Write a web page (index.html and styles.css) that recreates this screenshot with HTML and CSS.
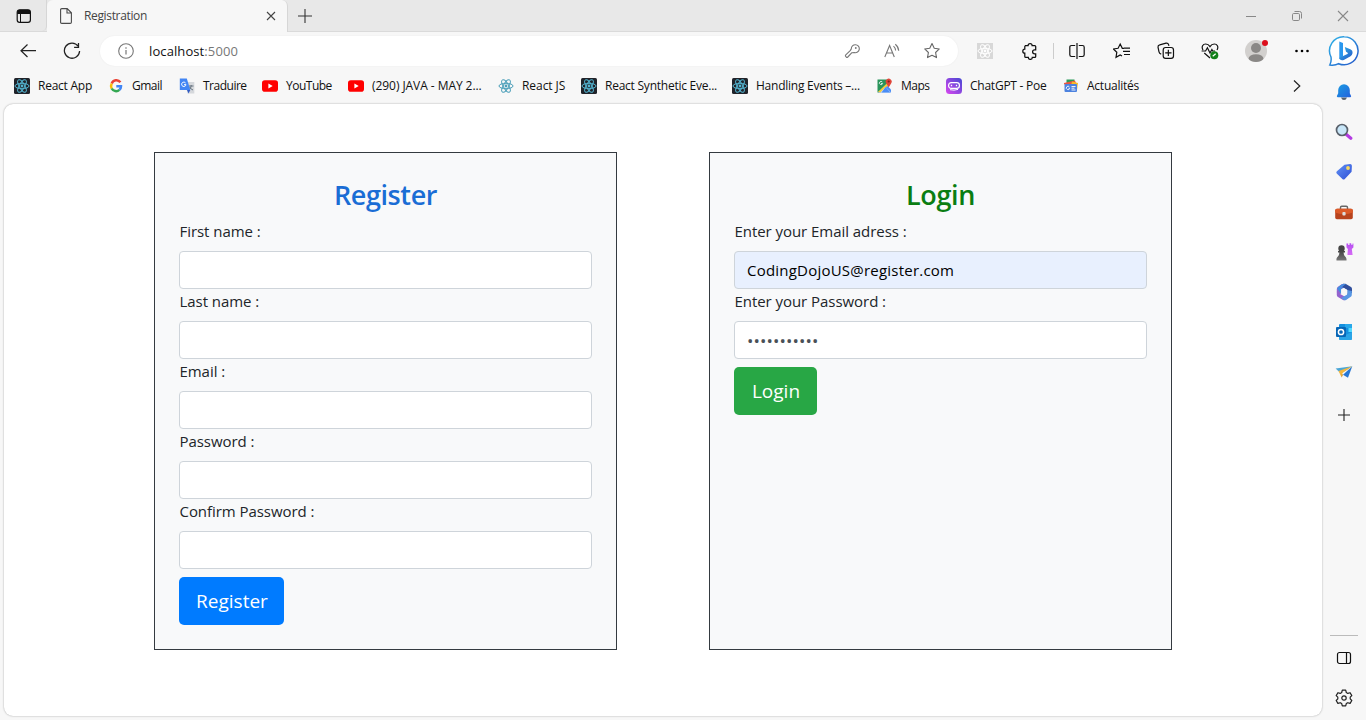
FILE: index.html
```html
<!DOCTYPE html>
<html lang="en">
<head>
<meta charset="utf-8">
<title>Registration</title>
<link rel="stylesheet" href="styles.css">
</head>
<body>
<svg width="0" height="0" class="defs" aria-hidden="true">
  <defs>
    <symbol id="atom" viewBox="0 0 16 16"><g fill="none" stroke="currentColor" stroke-width="1"><ellipse cx="8" cy="8" rx="7" ry="2.7"/><ellipse cx="8" cy="8" rx="7" ry="2.7" transform="rotate(60 8 8)"/><ellipse cx="8" cy="8" rx="7" ry="2.7" transform="rotate(120 8 8)"/></g><circle cx="8" cy="8" r="1.4" fill="currentColor"/></symbol>
    <symbol id="yt" viewBox="0 0 16 16"><rect y="2.3" width="16" height="11.4" rx="2.8" fill="#f00"/><path d="M6.4 5.6v4.8L10.7 8z" fill="#fff"/></symbol>
    <linearGradient id="bingG" x1="0" y1="0" x2="1" y2="1"><stop offset="0" stop-color="#31b5e8"/><stop offset="1" stop-color="#2456c9"/></linearGradient>
    <linearGradient id="bellG" x1="0" y1="0" x2="1" y2="1"><stop offset="0" stop-color="#1b9de2"/><stop offset="1" stop-color="#2361dd"/></linearGradient>
    <linearGradient id="tagG" x1="0" y1="0" x2="1" y2="1"><stop offset="0" stop-color="#6292f4"/><stop offset="1" stop-color="#2e4fd6"/></linearGradient>
    <linearGradient id="poeG" x1="0" y1="1" x2="1" y2="0"><stop offset="0" stop-color="#d946ef"/><stop offset="1" stop-color="#4548d2"/></linearGradient>
    <linearGradient id="pawnG" x1="0" y1="0" x2="0" y2="1"><stop offset="0" stop-color="#444"/><stop offset="1" stop-color="#777"/></linearGradient>
    <linearGradient id="rookG" x1="0" y1="0" x2="0" y2="1"><stop offset="0" stop-color="#b44df0"/><stop offset="1" stop-color="#d66cf5"/></linearGradient>
  </defs>
</svg>

<header class="tabstrip">
  <div class="tab-menu"><svg width="16" height="16" viewBox="0 0 16 16"><rect x="1.2" y="1.8" width="13.2" height="12.6" rx="2.4" fill="none" stroke="#111" stroke-width="1.2"/><path d="M1.2 6V4.2A2.4 2.4 0 0 1 3.6 1.8H12a2.4 2.4 0 0 1 2.4 2.4V6z" fill="#111"/><path d="M4.5 6v8" stroke="#111"/></svg></div>
  <div class="tab">
    <svg width="14" height="16" viewBox="0 0 14 16"><path d="M2.8.6h5.4l4.2 4.2v9.4q0 1.2-1.2 1.2H2.8q-1.2 0-1.2-1.2V1.8Q1.6.6 2.8.6zM8 .8V5h4.2" fill="none" stroke="#4b4b4b" stroke-width="1.1"/></svg>
    <span class="tab-title">Registration</span>
    <svg class="tab-close" width="10" height="10" viewBox="0 0 10 10"><path d="M1 1l8 8M9 1L1 9" stroke="#444" stroke-width="1.1"/></svg>
  </div>
  <div class="new-tab"><svg width="16" height="16" viewBox="0 0 16 16"><path d="M8 1v14M1 8h14" stroke="#333" stroke-width="1.1"/></svg></div>
  <div class="window-buttons">
    <span><svg width="12" height="12" viewBox="0 0 12 12"><path d="M1 6.5h10" stroke="#888"/></svg></span>
    <span><svg width="12" height="12" viewBox="0 0 12 12"><g fill="none" stroke="#888"><rect x="1.5" y="3.5" width="7" height="7" rx="1.2"/><path d="M3.5 1.5H8.5a2 2 0 0 1 2 2v5"/></g></svg></span>
    <span><svg width="12" height="12" viewBox="0 0 12 12"><path d="M1 1l10 10M11 1L1 11" stroke="#888" stroke-width="1.1"/></svg></span>
  </div>
</header>

<div class="browser">
  <div class="main">
    <nav class="toolbar">
      <span class="tool"><svg width="18" height="18" viewBox="0 0 18 18"><path d="M8.5 2.5L2 8.7l6.5 6.3M2 8.7h15" fill="none" stroke="#222" stroke-width="1.2"/></svg></span>
      <span class="tool"><svg width="18" height="18" viewBox="0 0 18 18"><path d="M15.2 4.2A7.6 7.6 0 1 0 16.6 9M15.5 1v4.4h-4.4" fill="none" stroke="#222" stroke-width="1.25"/></svg></span>
      <div class="address">
        <svg class="info" width="16" height="16" viewBox="0 0 16 16"><circle cx="8" cy="8" r="7.3" fill="none" stroke="#777" stroke-width="1.1"/><path d="M8 7v4.5M8 4.3v1.4" stroke="#777" stroke-width="1.2"/></svg>
        <span class="url">localhost<span class="port">:5000</span></span>
        <span class="addr-icon key"><svg width="16" height="16" viewBox="0 0 16 16"><path d="M7.300 5.900a4 4 0 1 1 3 3.700L7.900 9.700 3.800 14q-.8.700-1.600 0l-.5-.6q-.6-.8.100-1.500L6.200 7.600z" fill="none" stroke="#777" stroke-width="1.100" stroke-linejoin="round"/><circle cx="11.800" cy="5" r=".9" fill="#777"/></svg></span>
        <span class="addr-icon"><svg width="16" height="16" viewBox="0 0 16 16"><path d="M.8 14L5.600 2.500 10.300 14M2.500 10h6.200M9.500 3.200q2 1.700 2.100 4.400M11.300 1.200q3.200 2.600 3.400 6.500" fill="none" stroke="#777" stroke-width="1.100"/></svg></span>
        <span class="addr-icon"><svg width="18" height="18" viewBox="0 0 18 18"><path d="M9 1.600l2.250 4.650 5.050.7-3.700 3.550.9 5.100L9 13.200l-4.500 2.400.9-5.100L1.700 6.950l5.050-.7z" fill="none" stroke="#666" stroke-width="1.100" stroke-linejoin="round"/></svg></span>
      </div>
      <span class="tool ext"><svg width="16" height="16"><rect width="16" height="16" fill="#d8d8d8"/><use href="#atom" color="#fff"/></svg></span>
      <span class="tool puzzle"><svg width="18" height="18" viewBox="0 0 18 18"><path d="M4 3.600h3.100a2 2 0 0 1 4 0h2.600q1 0 1 1v3.200h-1.100a2 2 0 0 0 0 4h1.100v2.600q0 1-1 1h-2.400a2 2 0 0 1-4 0H4.800q-1 0-1-1v-3.200a2 2 0 0 1 0-4V4.600q0-1 1-1" fill="none" stroke="#111" stroke-width="1.250"/></svg></span>
      <i class="sep"></i>
      <span class="tool"><svg width="16" height="16" viewBox="0 0 16 16"><path d="M6.200 2.500H2.500q-1.700 0-1.700 1.700v7.600q0 1.700 1.700 1.700h3.700M9.800 2.500h3.700q1.700 0 1.700 1.700v7.600q0 1.700-1.700 1.700H9.800M8 0v16" fill="none" stroke="#111" stroke-width="1.200"/></svg></span>
      <span class="tool fav"><svg width="18" height="18" viewBox="0 0 18 18"><path d="M11 6.300H9.300L7.200 2 5.100 6.300l-4.700.7 3.400 3.300-.8 5 4.200-2.300 1.800 1M11 6.200h6M10 9.300h7M11 12.500h6" fill="none" stroke="#111" stroke-width="1.200"/></svg></span>
      <span class="tool"><svg width="18" height="18" viewBox="0 0 18 18"><path d="M4.200 12.200Q2.400 11.700 2 9.800L1 5.200Q.8 3.300 2.700 2.900L9 1.200q2-.4 2.700 1.700l.2 1" fill="none" stroke="#111" stroke-width="1.200"/><rect x="6.200" y="5.500" width="10.300" height="10.800" rx="2.400" fill="#f7f7f7" stroke="#111" stroke-width="1.200"/><path d="M11.350 7.700v6.400M8.200 10.900h6.300" stroke="#111" stroke-width="1.200"/></svg></span>
      <span class="tool"><svg width="18" height="18" viewBox="0 0 18 18"><path d="M2 8C0 4.500 2 2 4.700 2 7 2 8.500 3.800 9 4.600 9.500 3.800 11 2 13.300 2 16 2 18 4.500 16 8M.6 9h4l1.800-3.200L9 11l1.900-3.500.8 1.500H14M3.300 11L9 16" fill="none" stroke="#111" stroke-width="1.200"/><circle cx="13.300" cy="13.200" r="4" fill="#13801a"/><path d="M11.700 14.200l3-2.500" stroke="#fff" stroke-width="1.300"/></svg></span>
      <span class="tool avatar"><svg width="24" height="26" viewBox="0 0 24 26"><defs><clipPath id="face"><circle cx="12" cy="13" r="11"/></clipPath></defs><circle cx="12" cy="13" r="11" fill="#d2d0ce"/><g clip-path="url(#face)" fill="#8a8886"><circle cx="12" cy="10" r="5"/><ellipse cx="12" cy="21" rx="7.500" ry="4.800"/></g><circle cx="21" cy="5" r="3" fill="#dc0f1c"/></svg></span>
      <span class="tool more"><svg width="16" height="4" viewBox="0 0 16 4"><circle cx="2.500" cy="2" r="1.300"/><circle cx="8" cy="2" r="1.300"/><circle cx="13.500" cy="2" r="1.300"/></svg></span>
    </nav>

    <nav class="bookmarks">
      <a><svg><rect width="16" height="16" rx="1.500" fill="#20232a"/><use href="#atom" color="#53b4d0"/></svg><span class="tight">React App</span></a>
      <a><svg viewBox="0 0 16 16"><g fill="none" stroke-width="2.500"><path d="M12.400 4.300A5 5 0 0 0 3.700 5.500" stroke="#ea4335"/><path d="M3.700 5.500a5 5 0 0 0 0 5" stroke="#fbbc05"/><path d="M3.700 10.500a5 5 0 0 0 7.700 1.400" stroke="#34a853"/><path d="M11.400 11.900Q13 10.500 13 8.200H8.300" stroke="#4285f4"/></g></svg><span class="tighter">Gmail</span></a>
      <a><svg viewBox="0 0 16 16"><path d="M6 4h9.300v11.500H8.500z" fill="#d5d8dc"/><path d="M10 8h4.500M12.200 7v1q-.3 3-2.500 4M10.500 9q1 2 3.500 3" fill="none" stroke="#687580"/><path d="M.8.500h7l3.500 11.500H.8z" fill="#4285f4"/><path d="M8 12h3.300L9.500 15.500z" fill="#315bc4"/><path d="M6.600 5A2.200 2.200 0 1 0 7 6.700H5" fill="none" stroke="#fff" stroke-width="1"/></svg><span class="tighter">Traduire</span></a>
      <a><svg><use href="#yt"/></svg><span class="tighter">YouTube</span></a>
      <a><svg><use href="#yt"/></svg><span class="snug">(290) JAVA - MAY 2...</span></a>
      <a><svg><use href="#atom" color="#4c9fb9"/></svg><span class="snug">React JS</span></a>
      <a><svg><rect width="16" height="16" rx="1.500" fill="#20232a"/><use href="#atom" color="#53b4d0"/></svg><span class="tight">React Synthetic Eve...</span></a>
      <a><svg><rect width="16" height="16" rx="1.500" fill="#20232a"/><use href="#atom" color="#53b4d0"/></svg><span class="tight">Handling Events –...</span></a>
      <a><svg viewBox="0 0 16 16"><path d="M.5 1.500H11v5L1.500 14.500H.5z" fill="#29945a"/><path d="M1 14.500L9 6.500l5 5v3z" fill="#4b8df5"/><path d="M.8 14L13 2.500v3L3.500 14.500z" fill="#f7cd38"/><path d="M8.500 9l5.500 5.500H3.500z" fill="#e7edf5"/><path d="M8.500 9l5 5.500h-9z" fill="#4b8df5"/><path d="M5.300 4A1.600 1.600 0 1 0 5.600 5.500H4" fill="none" stroke="#fff" stroke-width=".8"/><path d="M11.700 9.500L9.200 5.300A3 3 0 1 1 14.200 5.300z" fill="#df4538"/><circle cx="11.700" cy="3.500" r="1.100" fill="#871e19"/></svg><span class="tighter">Maps</span></a>
      <a><svg viewBox="0 0 16 16"><rect width="16" height="16" rx="3.500" fill="url(#poeG)"/><rect x="2.600" y="4.600" width="10.800" height="5.800" rx="2.600" fill="none" stroke="#fff" stroke-width="1.200"/><path d="M5.500 6.700v1.500M10.500 6.700v1.500" stroke="#fff" stroke-width="1.300"/><path d="M4 11.700q4 1 8-.3" fill="none" stroke="#fff"/></svg><span class="tight">ChatGPT - Poe</span></a>
      <a><svg viewBox="0 0 16 16"><path d="M3.500 1.500h8v5h-8z" fill="#2b9b58"/><path d="M1 5l11-2.500 1.500 4H1z" fill="#e95643"/><path d="M9 3.500l6 1.500-1 7H7z" fill="#f7bd27"/><rect x="1.500" y="6" width="12.500" height="8" rx="1" fill="#4c82df"/><path d="M6.400 8.900A1.700 1.700 0 1 0 6.700 10.300H5.500M8.500 8.500h4M8.500 10.200h3M8.500 12h4" fill="none" stroke="#fff" stroke-width=".9"/></svg><span class="tight">Actualités</span></a>
      <svg class="chevron" viewBox="0 0 16 16"><path d="M5 2.500L10.800 8 5 13.500" fill="none" stroke="#222" stroke-width="1.200"/></svg>
    </nav>

    <main class="page">
      <form class="card">
        <h3 class="register-title">Register</h3>
        <label>First name :</label><div class="field"></div>
        <label>Last name :</label><div class="field"></div>
        <label>Email :</label><div class="field"></div>
        <label>Password :</label><div class="field"></div>
        <label>Confirm Password :</label><div class="field"></div>
        <button type="button" class="btn btn-primary">Register</button>
      </form>
      <form class="card">
        <h3 class="login-title">Login</h3>
        <label>Enter your Email adress :</label>
        <div class="field autofill">CodingDojoUS@register.com</div>
        <label>Enter your Password :</label>
        <div class="field password">•••••••••••</div>
        <button type="button" class="btn btn-success">Login</button>
      </form>
    </main>
  </div>

  <aside class="sidebar">
    <span class="side bing"><svg width="32" height="32" viewBox="0 0 32 32"><path d="M16.200 1.800a14 14 0 1 1-5.600 26.900Q7 30.700 1.800 30 3.700 26.500 3 22A14 14 0 0 1 16.200 1.800z" fill="#fff" stroke="url(#bingG)" stroke-width="1.500"/><path d="M11.300 6.500l3.700 1.500v13.500l-3.700 2.600z" fill="#2a97ee"/><path d="M16.800 12l5.500 2.300q2.600 1.200 2.200 4-.4 1.900-2 2.900l-6.700 3.700q-2.300 1-4-.7-.6-1-.4-1.500l8-3.800q1.200-.7-.1-1.500l-1.300-.7z" fill="url(#bingG)"/></svg></span>
    <span class="side bell"><svg width="18" height="18" viewBox="0 0 18 18"><path d="M6 14.500h6q-.8 2.500-3 2.500t-3-2.500" fill="#58616c"/><path d="M3.200 7a5.800 5.800 0 0 1 11.600 0v3.300l1.300 2.800q.3 1.100-.8 1.100H2.700q-1.100 0-.8-1.100l1.300-2.800z" fill="url(#bellG)"/></svg></span>
    <span class="side"><svg width="18" height="18" viewBox="0 0 18 18"><path d="M10.500 10.700l5.300 4.500" stroke="#b43be2" stroke-width="3.200" stroke-linecap="round"/><circle cx="7" cy="7" r="5.500" fill="#c8e6f8" stroke="#59616b" stroke-width="1.700"/></svg></span>
    <span class="side"><svg width="18" height="18" viewBox="0 0 18 18"><path d="M9.500 1.700l5.700-.6q1.600 0 1.700 1.600l-.3 6L9.800 16q-1.200 1.200-2.400 0L1.700 10.500q-1-1.200.2-2.300z" fill="url(#tagG)"/><circle cx="13" cy="5" r="1.900" fill="#f9d85e"/></svg></span>
    <span class="side toolbox"><svg width="20" height="18" viewBox="0 0 20 18"><path d="M6.500 5V3.500q0-1.300 1.300-1.300h4.400q1.300 0 1.300 1.300V5" fill="none" stroke="#666" stroke-width="1.400"/><rect x="1.200" y="4.800" width="17.600" height="10.500" rx="1.700" fill="#b8431d"/><path d="M1.200 6.500q0-1.700 1.700-1.700h14.200q1.700 0 1.700 1.700v2q-4 1.500-8.800 1.500T1.200 8.500z" fill="#dc5a28"/><rect x="8.400" y="8" width="3.200" height="3.500" rx="1" fill="#ddd"/></svg></span>
    <span class="side"><svg width="20" height="20" viewBox="0 0 20 20"><path d="M12.500 1.500h1.700v1.400h1.300V1.200h1.700v1.500h1.400V1.400h.8v4l-1.600 1.500.8 6.100h-5.200l.5-6.100-1.400-1.500z" fill="url(#rookG)"/><circle cx="7.500" cy="6.500" r="3.200" fill="#444"/><path d="M4 9h7v1.600H9.600q0 3 2.200 4.600 1 1.400.7 3.300h-10q-.3-2 .7-3.300 2.200-1.600 2.200-4.600H4z" fill="url(#pawnG)"/></svg></span>
    <span class="side"><svg width="18" height="18" viewBox="0 0 18 18"><path d="M8.300.8q-6 2-6.500 8.500l3.700 2V6.600L13 2.500z" fill="#477ad8"/><path d="M8.300.8h2.200l5.500 3.300q1 .7 1 2v4L12.300 12V6.900L6.200 3.300z" fill="#314f9d"/><path d="M1.800 6v6q0 1.300 1.200 2l5 3q1 .6 2 0l3-1.800-7.500-4V6L9 1.500q-1-.8-2-.3L3 3.700Q1.800 4.500 1.800 6z" fill="#9463ce"/><path d="M16.800 8v3.800q0 1.300-1 2L11 17q-1 .5-2 0l-3-2 6.300-3.600V7z" fill="#5796e4"/><path d="M2 5.500Q2.800 3.900 7.200 1.200L11 .9 6.200 4.400v6.700z" fill="#438ee0"/><path d="M6.200 6.800L9 5.200l3.300 1.900v3.500L9.200 12.400l-3-1.800z" fill="#f7f7f7"/></svg></span>
    <span class="side"><svg width="18" height="18" viewBox="0 0 18 18"><rect x="4" y="1" width="13" height="15" rx="1" fill="#1490df"/><path d="M10 1h6.500q.5 0 .5.500V5h-7z" fill="#28a8ea"/><path d="M13.500 5H17v4h-3.500z" fill="#50d9ff"/><path d="M4 9l6.500 3L17 9v7.300q0 .7-.7.7H4.700Q4 17 4 16.300z" fill="#29a4e7"/><rect x="1" y="4" width="10" height="10" rx="1" fill="#0766b6"/><circle cx="6" cy="9" r="2.600" fill="none" stroke="#fff" stroke-width="1.500"/></svg></span>
    <span class="side"><svg width="18" height="18" viewBox="0 0 18 18"><path d="M.6 5.500L17.300 3.200 6 10.500z" fill="#4ba6d6"/><path d="M17.300 3.200L13 14.700l-5-3z" fill="#2877d4"/><path d="M3.500 8L17.300 3.200 7.500 10l-.9 4.500z" fill="#f6b73d"/><path d="M8.100 11.500L6.600 14.500v-3.200z" fill="#c78b25"/></svg></span>
    <span class="side add"><svg width="14" height="14" viewBox="0 0 14 14"><path d="M7 1v12M1 7h12" stroke="#222" stroke-width="1.100"/></svg></span>
    <i class="side-line"></i>
    <span class="side panel"><svg width="16" height="16" viewBox="0 0 16 16"><rect x="1.500" y="2.500" width="13" height="11" rx="2" fill="none" stroke="#111" stroke-width="1.200"/><path d="M10.500 2.500v11" stroke="#111" stroke-width="1.200"/></svg></span>
    <span class="side"><svg width="18" height="18" viewBox="0 0 18 18"><path d="M7.300 1.200h3.400l.6 2.300 1.500.9 2.300-.7 1.700 2.900L15.200 8.200v1.700l1.600 1.600-1.700 2.900-2.300-.7-1.500.9-.6 2.300H7.300l-.6-2.300-1.500-.9-2.300.7-1.700-2.900L2.800 9.900V8.200L1.200 6.600l1.700-2.900 2.300.7 1.500-.9z" fill="none" stroke="#222" stroke-width="1.200" stroke-linejoin="round"/><circle cx="9" cy="9" r="2.200" fill="none" stroke="#222" stroke-width="1.200"/></svg></span>
  </aside>
</div>
</body>
</html>
```
FILE: styles.css
```css
* { box-sizing: border-box; }
body { margin: 0; width: 1366px; height: 720px; overflow: hidden; background: #f7f7f7; font-family: "Open Sans", "Noto Sans", sans-serif; color: #212529; }
svg { display: block; flex: none; }
.defs { position: absolute; }
.tabstrip { display: flex; height: 32px; background: #e8e8e8; border-bottom: 1px solid #dadada; }
.tab-menu { width: 47px; display: flex; align-items: center; justify-content: center; padding-left: 1px; border-right: 1px solid #d6d6d6; border-radius: 0 0 5px 0; }
.tab { width: 241px; height: 32px; display: flex; align-items: center; gap: 11px; padding: 0 11px 0 12px; background: #f7f7f7; border-radius: 6px 6px 0 0; border-right: 1px solid #d6d6d6; }
.tab-title { font-size: 12px; line-height: 16px; letter-spacing: -.35px; color: #444; white-space: nowrap; }
.tab-close { margin-left: auto; }
.new-tab { width: 33px; display: grid; place-items: center; }
.window-buttons { display: flex; margin-left: auto; }
.window-buttons span { width: 46px; display: grid; place-items: center; }
.browser { display: flex; height: 688px; }
.main { width: 1322px; display: flex; flex-direction: column; }
.toolbar { height: 38px; display: flex; align-items: center; padding-left: 6px; }
.tool { width: 44px; display: grid; place-items: center; }
.address { width: 858px; height: 30px; margin-left: 6px; border-radius: 15px; background: #fff; display: flex; align-items: center; padding: 0 6px 0 18px; box-shadow: 0 0 2px rgba(0, 0, 0, .06); }
.url { margin-left: 15px; margin-right: auto; font-size: 13px; letter-spacing: .1px; color: #111; white-space: nowrap; }
.port { color: #777; }
.addr-icon { width: 40px; display: grid; place-items: center; }
.key { padding-right: 1px; }
.ext { margin-left: 5px; }
.puzzle { margin-left: 1px; }
.sep { width: 1px; height: 16px; margin: 0 1px; background: #ccc; }
.fav { margin-left: 1px; }
.avatar { margin-left: 2px; }
.more { width: 40px; margin-left: 4px; }
.bookmarks { height: 32px; margin-bottom: 2px; display: grid; grid-template-columns: 94px 71px 83px 86px 150px 83px 151px 145px 69px 117px 226px 16px; align-items: center; padding-left: 14px; font-size: 12px; line-height: 16px; color: #111; }
.bookmarks a { display: flex; align-items: center; gap: 8px; white-space: nowrap; }
.bookmarks svg { width: 16px; height: 16px; }
.snug { letter-spacing: -.06px; }
.tight { letter-spacing: -.24px; }
.tighter { letter-spacing: -.5px; }
.page { height: 612px; margin-left: 4px; background: #fff; border-radius: 9px; box-shadow: 0 0 2px rgba(0, 0, 0, .35); padding: 48px 150px 0; display: flex; justify-content: space-between; align-items: flex-start; }
.card { width: 463px; height: 498px; padding: 24px; border: 1px solid #343a40; background: #f8f9fa; }
.card h3 { margin: 0 0 8px; padding-top: 1px; font-size: 27px; line-height: 33px; font-weight: 600; letter-spacing: -.4px; text-align: center; }
.register-title { color: #1a6dd5; }
.login-title { color: #0a7d12; }
.card label { display: block; height: 24px; margin-bottom: 8px; padding-left: .5px; font-size: 15px; line-height: 24px; letter-spacing: -.05px; white-space: nowrap; }
.field { height: 38px; padding: 0 12px; border: 1px solid #ced4da; border-radius: 4px; background: #fff; font-size: 15px; line-height: 37px; color: #495057; }
.autofill { background: #e8f0fe; color: #000; letter-spacing: .22px; }
.password { font-size: 17px; letter-spacing: .1px; }
.btn { height: 48px; margin-top: 8px; padding: 1px 0 0 1px; border: 0; border-radius: 5px; color: #fff; font: 19px/47px "Open Sans", "Noto Sans", sans-serif; display: block; }
.btn-primary { width: 105px; background: #007bff; }
.btn-success { width: 83px; background: #28a745; }
.sidebar { width: 44px; padding-bottom: 2px; display: flex; flex-direction: column; align-items: center; }
.side { height: 40px; display: grid; place-items: center; flex: none; }
.bing { height: 38px; }
.bell { height: 44px; margin-bottom: -2px; }
.toolbox { padding-top: 1px; }
.add { margin-top: 3px; }
.side-line { width: 28px; height: 1px; margin-top: auto; background: #bbb; }
.panel { margin-top: 2px; }
```
